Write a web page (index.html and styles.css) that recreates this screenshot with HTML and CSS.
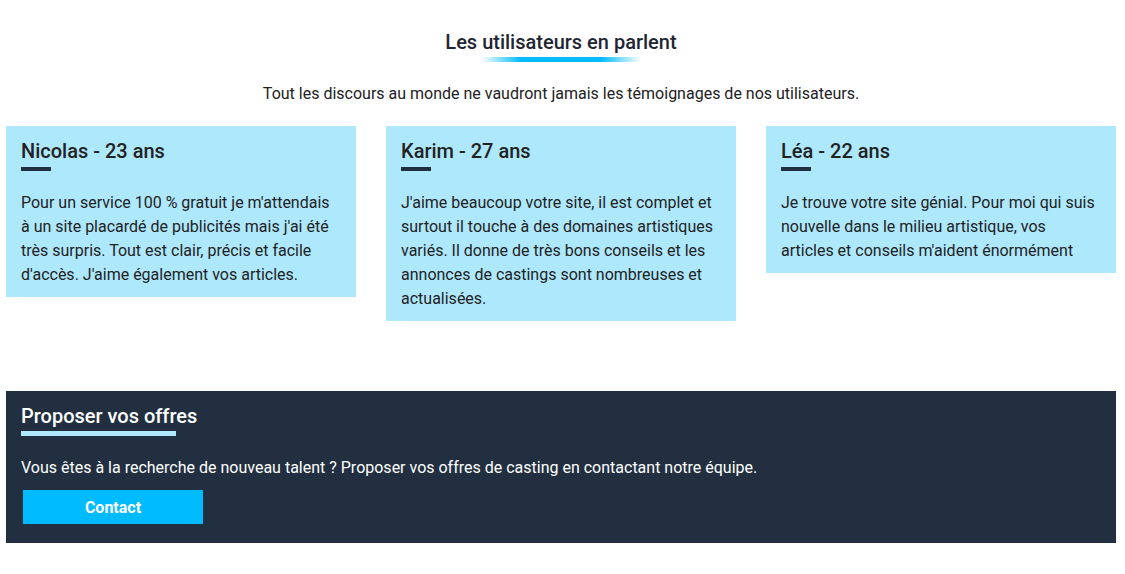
FILE: index.html
```html
<!DOCTYPE html>
<html lang="fr">
<head>
<meta charset="utf-8">
<title>Les utilisateurs en parlent</title>
<link rel="stylesheet" href="styles.css">
</head>
<body>
<main class="page">
  <section class="testimonials">
    <h2 class="section-title">Les utilisateurs en parlent</h2>
    <div class="title-bar"></div>
    <p class="section-intro">Tout les discours au monde ne vaudront jamais les témoignages de nos utilisateurs.</p>
    <div class="cards">
      <article class="card">
        <h3 class="card-title">Nicolas - 23 ans</h3>
        <div class="card-bar"></div>
        <p class="card-text">Pour un service 100 % gratuit je m'attendais à un site placardé de publicités mais j'ai été très surpris. Tout est clair, précis et facile d'accès. J'aime également vos articles.</p>
      </article>
      <article class="card">
        <h3 class="card-title">Karim - 27 ans</h3>
        <div class="card-bar"></div>
        <p class="card-text">J'aime beaucoup votre site, il est complet et surtout il touche à des domaines artistiques variés. Il donne de très bons conseils et les annonces de castings sont nombreuses et actualisées.</p>
      </article>
      <article class="card">
        <h3 class="card-title">Léa - 22 ans</h3>
        <div class="card-bar"></div>
        <p class="card-text">Je trouve votre site génial. Pour moi qui suis nouvelle dans le milieu artistique, vos articles et conseils m'aident énormément</p>
      </article>
    </div>
  </section>
  <section class="offers">
    <h3 class="offers-title">Proposer vos offres</h3>
    <div class="offers-bar"></div>
    <p class="offers-text">Vous êtes à la recherche de nouveau talent ? Proposer vos offres de casting en contactant notre équipe.</p>
    <a class="btn-contact" href="#">Contact</a>
  </section>
</main>
</body>
</html>
```

FILE: styles.css
```css
* { box-sizing: border-box; }

html, body {
  margin: 0;
  padding: 0;
  background: #ffffff;
}

body {
  font-family: Roboto, "Liberation Sans", Arial, sans-serif;
  color: #222;
}

.page {
  width: 1110px;
  margin-left: 6px;
  padding-top: 30px;
}

.testimonials {
  display: flex;
  flex-direction: column;
  align-items: center;
}

.section-title {
  margin: 0;
  font-size: 20px;
  line-height: 24px;
  font-weight: 500;
  color: #1f2633;
}

.title-bar {
  width: 160px;
  height: 5px;
  margin-top: 3px;
  background: linear-gradient(to right, rgba(0,187,255,0) 0%, #00bbff 25%, #00bbff 75%, rgba(0,187,255,0) 100%);
}

.section-intro {
  margin: 20px 0 0;
  font-size: 16px;
  line-height: 24px;
  color: #222;
}

.cards {
  align-self: stretch;
  display: flex;
  align-items: flex-start;
  gap: 30px;
  margin-top: 20px;
}

.card {
  width: 350px;
  background: #aee8fd;
  padding: 13px 15px 10px;
}

.card-title {
  margin: 0;
  font-size: 20px;
  line-height: 24px;
  font-weight: 500;
  color: #222;
}

.card-bar {
  width: 30px;
  height: 4px;
  margin-top: 4px;
  background: #212f40;
}

.card-text {
  margin: 20px 0 0;
  font-size: 16px;
  line-height: 24px;
  color: #222;
}

.offers {
  margin-top: 70px;
  background: #212f40;
  color: #fff;
  padding: 13px 15px 19px;
}

.offers-title {
  margin: 0;
  font-size: 20px;
  line-height: 24px;
  font-weight: 500;
  color: #fff;
}

.offers-bar {
  width: 155px;
  height: 5px;
  margin-top: 3px;
  background: #aee8fd;
}

.offers-text {
  margin: 20px 0 0;
  font-size: 16px;
  line-height: 24px;
  color: #fff;
}

.btn-contact {
  display: flex;
  align-items: center;
  justify-content: center;
  width: 180px;
  height: 34px;
  margin: 10px 0 0 2px;
  background: #00bbff;
  color: #fff;
  font-size: 16px;
  font-weight: 700;
  text-decoration: none;
}
```
